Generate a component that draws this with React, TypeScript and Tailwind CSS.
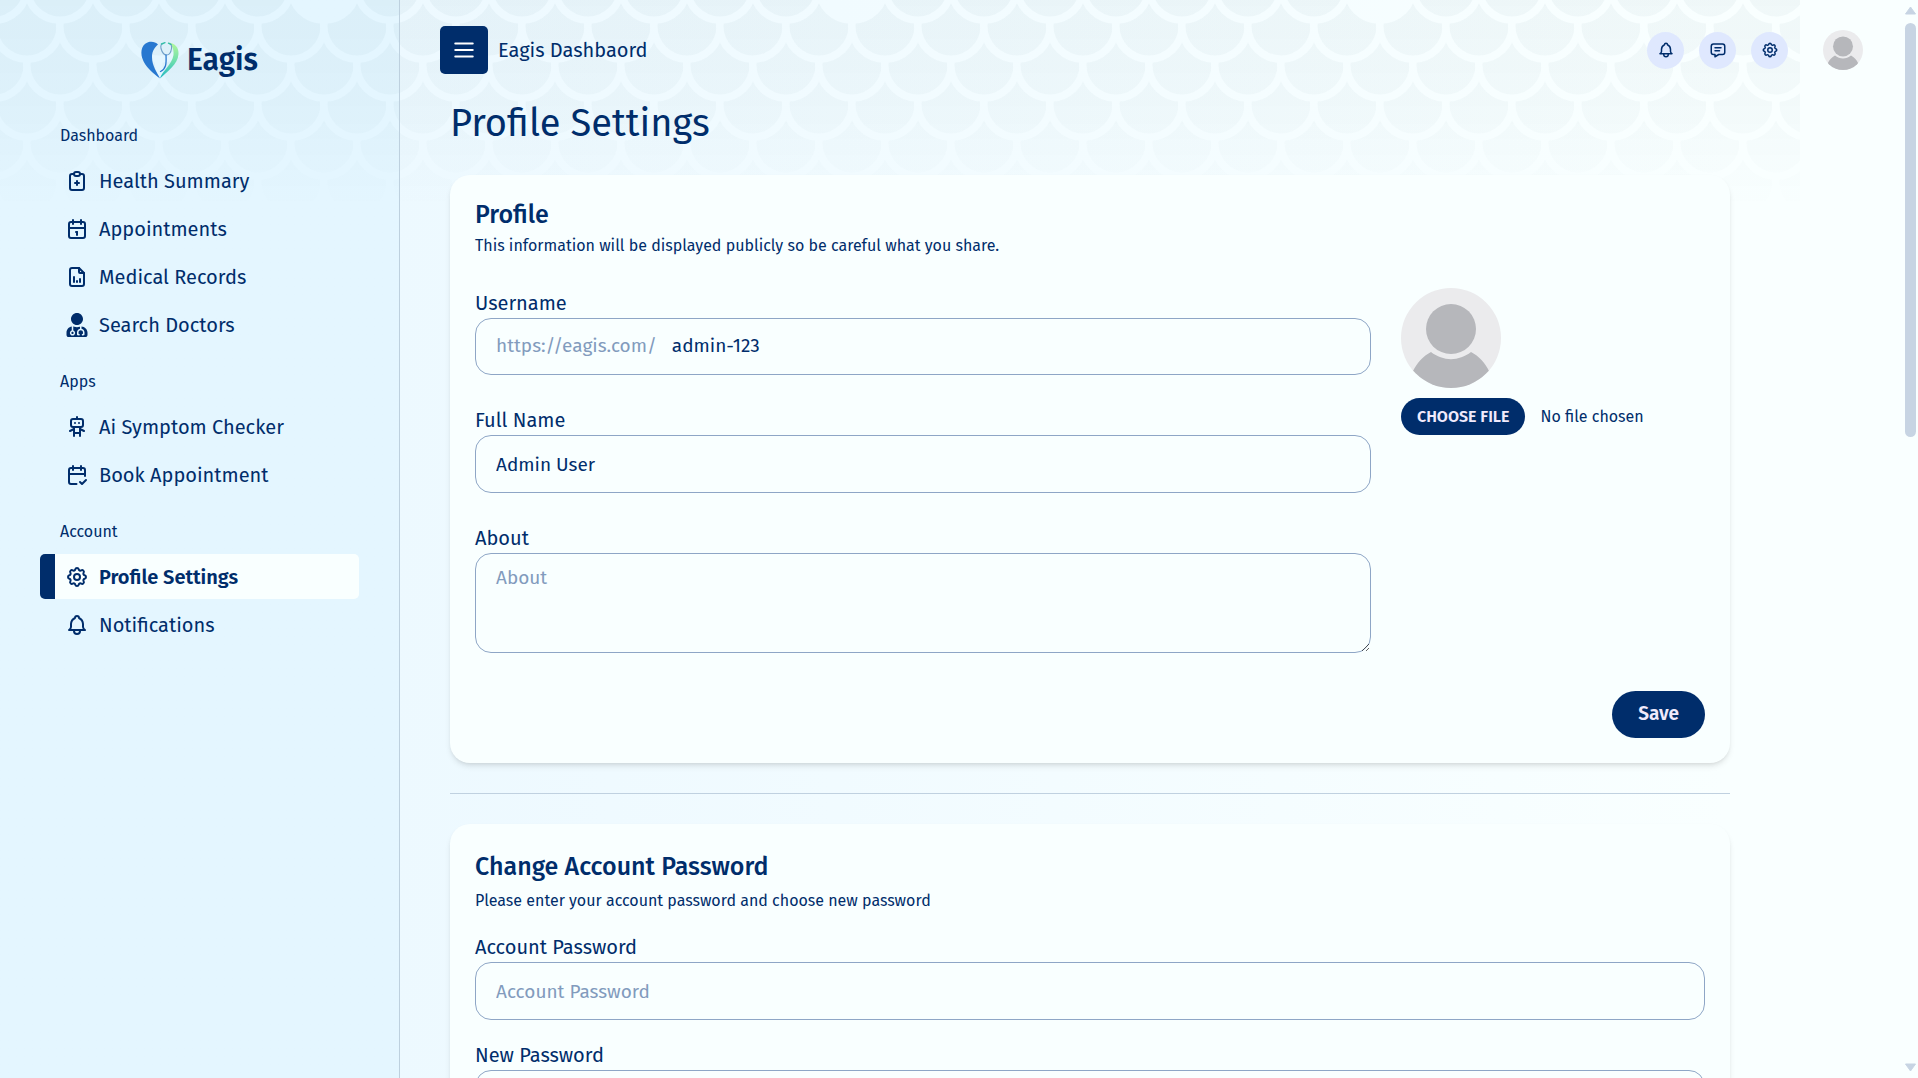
import type { ReactNode } from 'react';
import { FaUserMd } from 'react-icons/fa';
import {
  TbBell,
  TbCalendar,
  TbCalendarCheck,
  TbFileAnalytics,
  TbMenu2,
  TbMessage,
  TbReportMedical,
  TbRobot,
  TbSettings,
} from 'react-icons/tb';

interface NavItem {
  label: string;
  icon: ReactNode;
  active?: boolean;
}

const sections: { title: string; items: NavItem[] }[] = [
  {
    title: 'Dashboard',
    items: [
      { label: 'Health Summary', icon: <TbReportMedical className="size-6" /> },
      { label: 'Appointments', icon: <TbCalendar className="size-6" /> },
      { label: 'Medical Records', icon: <TbFileAnalytics className="size-6" /> },
      { label: 'Search Doctors', icon: <FaUserMd className="size-6" /> },
    ],
  },
  {
    title: 'Apps',
    items: [
      { label: 'Ai Symptom Checker', icon: <TbRobot className="size-6" /> },
      { label: 'Book Appointment', icon: <TbCalendarCheck className="size-6" /> },
    ],
  },
  {
    title: 'Account',
    items: [
      { label: 'Profile Settings', icon: <TbSettings className="size-6" />, active: true },
      { label: 'Notifications', icon: <TbBell className="size-6" /> },
    ],
  },
];

const inputClass =
  'w-full rounded-2xl border border-[#8ea6c6] bg-transparent px-5 text-[19px] text-[#002d6b] placeholder:text-[#829bbd] outline-none';

// Rows are drawn bottom to top so that each one overlaps the row below it
const scaleRows = [5, 4, 3, 2, 1, 0];
const scaleColumns = Array.from({ length: 30 }, (_, i) => i);

// Fish-scale wallpaper behind the top of the page, fading out downwards
function Scales() {
  return (
    <svg className="absolute left-0 top-0 h-[220px] w-[1800px]" aria-hidden="true">
      <defs>
        <mask id="scales">
          {scaleRows.map((row) =>
            scaleColumns.map((col) => {
              const cx = col * 66 - (row % 2 === 0 ? 6 : 39);
              const cy = row * 39 - 13;
              // every eighth scale of the first row is left blank
              const blank = row === 0 && col % 8 === 5;
              return (
                <g key={`${row}-${col}`}>
                  <circle cx={cx} cy={cy} r="37" fill="#000" />
                  {!blank && <circle cx={cx} cy={cy} r="29.5" fill="#fff" />}
                </g>
              );
            }),
          )}
        </mask>
        <linearGradient id="fade" x1="0" y1="0" x2="0" y2="1">
          <stop offset="0" stopColor="#0a4050" stopOpacity="0.038" />
          <stop offset="0.5" stopColor="#0a4050" stopOpacity="0.025" />
          <stop offset="0.95" stopColor="#0a4050" stopOpacity="0" />
        </linearGradient>
      </defs>
      <rect width="1800" height="220" fill="url(#fade)" mask="url(#scales)" />
    </svg>
  );
}

function Logo() {
  return (
    <svg viewBox="0 0 38 38" className="size-[38px]" aria-hidden="true">
      <defs>
        <linearGradient id="leaf" x1="0" y1="0" x2="0" y2="1">
          <stop offset="0" stopColor="#b4f79b" />
          <stop offset="0.55" stopColor="#69dcae" />
          <stop offset="1" stopColor="#20b7c4" />
        </linearGradient>
      </defs>
      <path
        d="M17 3.500C14 .2 8 -.2 4.200 2.800C.2 6 -.4 12 1.200 17C4 26 12 32 19 37.500C16 31 11 25 11 16C11 10 14 6 17 3.500Z"
        fill="#2878d0"
      />
      <path
        d="M27.500 1.500C34 2 38 7 37.500 13C37 23 26 31 19 37.500C21 30 31 24 32.500 14C33 8 31 4 27.500 1.500Z"
        fill="url(#leaf)"
      />
      <g fill="none" strokeLinecap="round">
        <path
          d="M22.500 2.500C20 2.500 19.500 5 20 7.500C21 11 22.500 14 25.500 14S30 11 30.500 7.500C31 5 30 2.500 28 2.500"
          stroke="#6f9fc8"
          strokeWidth="1.1"
        />
        <path d="M25 14C25.500 23 25 28 19.500 30.500" stroke="#2878d0" strokeWidth="1.3" />
        <path d="M20.500 3L24 1.700M27.500 2.200L30 3.500" stroke="#35bfa8" strokeWidth="1.4" />
      </g>
    </svg>
  );
}

function Avatar({ className, id }: { className: string; id: string }) {
  return (
    <svg viewBox="0 0 100 100" className={className} role="img" aria-label="User avatar">
      <clipPath id={id}>
        <circle cx="50" cy="50" r="50" />
      </clipPath>
      <g clipPath={`url(#${id})`}>
        <rect width="100" height="100" fill="#ebebed" />
        <path d="M12 83C16 75 22 68 30 64C42 73.500 58 73.500 70 64C78 68 84 75 88 83V100H12Z" fill="#b6b7bb" />
        <circle cx="50" cy="41" r="25" fill="#b6b7bb" />
      </g>
    </svg>
  );
}

function Sidebar() {
  return (
    <aside className="w-[400px] shrink-0 border-r border-[#bdd0de] bg-[#74d4ff]/7 px-10">
      <a href="#" className="mt-[41px] flex items-center justify-center gap-2 text-3xl leading-[38px] font-semibold">
        <Logo />
        Eagis
      </a>
      <nav className="mt-[47px] flex flex-col gap-[25px]">
        {sections.map((section) => (
          <div key={section.title}>
            <h2 className="pl-5 text-base leading-5">{section.title}</h2>
            <ul className="mt-3 flex flex-col gap-[3px]">
              {section.items.map((item) => (
                <li key={item.label}>
                  <a
                    href="#"
                    className={
                      item.active
                        ? 'flex h-[45px] items-center gap-[10px] rounded-[5px] border-l-[15px] border-[#002d6b] bg-[#f9ffff] pl-[10px] text-xl font-semibold'
                        : 'flex h-[45px] items-center gap-[10px] pl-[25px] text-xl'
                    }
                  >
                    {item.icon}
                    {item.label}
                  </a>
                </li>
              ))}
            </ul>
          </div>
        ))}
      </nav>
    </aside>
  );
}

function Header() {
  return (
    <header className="flex h-[100px] items-center justify-between px-10">
      <div className="flex items-center gap-[10px]">
        <button type="button" aria-label="Toggle menu" className="flex size-12 items-center justify-center rounded-[5px] bg-[#002d6b] text-white">
          <TbMenu2 className="size-[26px]" />
        </button>
        <p className="text-xl">Eagis Dashbaord</p>
      </div>
      <div className="flex items-center gap-[15px]">
        <button type="button" aria-label="Notifications" className="flex size-[37px] items-center justify-center rounded-full bg-[#dfe8fe]">
          <TbBell className="size-[18px]" />
        </button>
        <button type="button" aria-label="Messages" className="flex size-[37px] items-center justify-center rounded-full bg-[#dfe8fe]">
          <TbMessage className="size-[18px]" />
        </button>
        <button type="button" aria-label="Settings" className="flex size-[37px] items-center justify-center rounded-full bg-[#dfe8fe]">
          <TbSettings className="size-[18px]" />
        </button>
        <button type="button" aria-label="Account" className="ml-5">
          <Avatar id="avatar-small" className="size-10" />
        </button>
      </div>
    </header>
  );
}

function Field({ id, label, children }: { id: string; label: string; children: ReactNode }) {
  return (
    <div>
      <label htmlFor={id} className="block text-xl leading-[30px]">
        {label}
      </label>
      {children}
    </div>
  );
}

function ProfileCard() {
  return (
    <form className="rounded-[20px] bg-[#f9ffff] p-[25px] shadow-md">
      <h2 className="text-[25px] leading-[30px] font-medium">Profile</h2>
      <p className="mt-1 text-base leading-6">This information will be displayed publicly so be careful what you share.</p>
      <div className="mt-[30px] flex gap-[30px]">
        <div className="flex flex-1 flex-col gap-[30px]">
          <Field id="username" label="Username">
            <div className="flex h-[57px] items-center rounded-2xl border border-[#8ea6c6] px-5 text-[19px]">
              <span className="text-[#829bbd]">https://eagis.com/</span>
              <input id="username" defaultValue="admin-123" className="ml-[15px] flex-1 bg-transparent outline-none" />
            </div>
          </Field>
          <Field id="full-name" label="Full Name">
            <input id="full-name" defaultValue="Admin User" className={`${inputClass} h-[58px]`} />
          </Field>
          <Field id="about" label="About">
            <textarea id="about" placeholder="About" className={`${inputClass} block h-[100px] resize-y py-[10px]`} />
          </Field>
        </div>
        <div className="w-[304px]">
          <Avatar id="avatar-large" className="size-[100px]" />
          <input
            type="file"
            aria-label="Profile picture"
            className="mt-[10px] w-full text-base file:mr-[15px] file:h-[37px] file:rounded-full file:bg-[#002d6b] file:px-4 file:text-base file:font-semibold file:text-[#f0eafc] file:uppercase"
          />
        </div>
      </div>
      <div className="mt-[38px] flex justify-end">
        <button type="submit" className="h-[47px] rounded-full bg-[#002d6b] px-[26px] text-[19px] font-semibold text-[#f0eafc]">
          Save
        </button>
      </div>
    </form>
  );
}

function PasswordCard() {
  return (
    <form className="rounded-[20px] bg-[#f9ffff] p-[25px] shadow-md">
      <h2 className="text-[25px] leading-9 font-medium">Change Account Password</h2>
      <p className="mt-1 text-base leading-6">Please enter your account password and choose new password</p>
      <div className="mt-[19px] flex flex-col gap-5">
        <Field id="account-password" label="Account Password">
          <input id="account-password" type="password" placeholder="Account Password" className={`${inputClass} h-[58px]`} />
        </Field>
        <Field id="new-password" label="New Password">
          <input id="new-password" type="password" placeholder="New Password" className={`${inputClass} h-[58px]`} />
        </Field>
      </div>
    </form>
  );
}

function Scrollbar() {
  return (
    <div className="flex w-[15px] shrink-0 flex-col items-center justify-between py-[6px]" aria-hidden="true">
      <div className="flex h-[431px] w-[11px] flex-col gap-2">
        <svg viewBox="0 0 11 9" className="h-[9px] w-[11px] shrink-0">
          <path d="M5.500 1L10.500 8H.5Z" fill="#c7d4e3" stroke="#c7d4e3" strokeLinejoin="round" />
        </svg>
        <div className="flex-1 rounded-full bg-[#c7d4e3]" />
      </div>
      <svg viewBox="0 0 11 9" className="h-[9px] w-[11px]">
        <path d="M5.500 8L10.500 1H.5Z" fill="#c7d4e3" stroke="#c7d4e3" strokeLinejoin="round" />
      </svg>
    </div>
  );
}

export default function App() {
  return (
    <div className="relative h-screen overflow-hidden bg-linear-to-r from-[#edf9ff] from-20% to-[#f9ffff] to-90% font-['Fira_Sans','Noto_Sans',sans-serif] text-[#002d6b]">
      <Scales />
      <div className="relative flex h-full">
        <Sidebar />
        <div className="min-w-0 flex-1">
          <Header />
          <main className="pl-[50px] pr-[173px]">
            <h1 className="text-[38px] leading-[46px]">Profile Settings</h1>
            <div className="mt-[29px] flex flex-col gap-[30px]">
              <ProfileCard />
              <hr className="border-[#c0d1e0]" />
              <PasswordCard />
            </div>
          </main>
        </div>
        <Scrollbar />
      </div>
    </div>
  );
}
